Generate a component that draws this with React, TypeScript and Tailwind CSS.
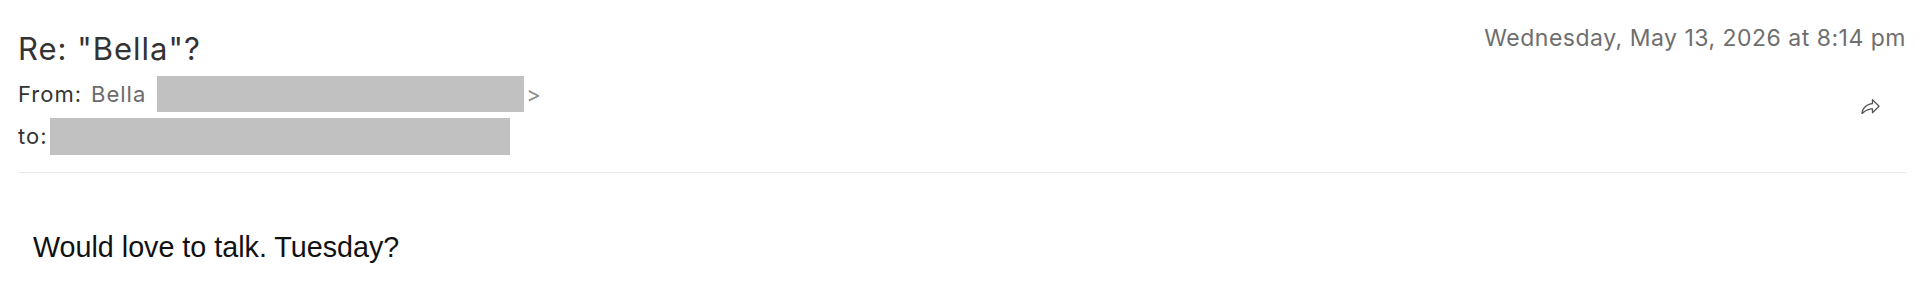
import { PiShareFat } from 'react-icons/pi'

export default function App() {
  return (
    <div className="min-h-[292px] w-full bg-white">
      <div className="pl-[18px] pr-[14px]">
        <div className="flex items-start justify-between pt-[24px]">
          <div className="flex flex-col font-['Inter',sans-serif] text-[#333]">
            <h1 className="mt-[7px] text-[31px] leading-[36px] font-normal tracking-[1px]">Re: "Bella"?</h1>
            <div className="mt-[9px] flex h-[36px] items-center text-[22px] tracking-[1px]">
              <span>From:</span>
              <span className="ml-[9px] text-[#6b6b6b]">Bella</span>
              <span className="ml-[11px] h-[36px] w-[367px] bg-[#c1c1c1]" />
              <span className="ml-[2px] text-[#8a8a8a]">&gt;</span>
            </div>
            <div className="mt-[6px] flex h-[37px] items-center text-[22px] tracking-[1px]">
              <span>to:</span>
              <span className="ml-[2px] h-[37px] w-[460px] bg-[#c1c1c1]" />
            </div>
          </div>
          <div className="flex flex-col items-end font-['Inter',sans-serif]">
            <div className="text-[23px] leading-[28px] tracking-[0.5px] text-[#6e6e6e]">
              Wednesday, May 13, 2026 at 8:14 pm
            </div>
            <button className="mt-[45px] mr-[25px] text-[#555]">
              <PiShareFat className="h-[21px] w-[21px]" />
            </button>
          </div>
        </div>
        <div className="mt-[17px] h-px bg-[#e8e8f0]" />
      </div>
      <div className="pl-[33px] pt-[53px] font-['Liberation_Sans',Arial,sans-serif] text-[28.7px] text-[#111]">
        Would love to talk. Tuesday?
      </div>
    </div>
  )
}
